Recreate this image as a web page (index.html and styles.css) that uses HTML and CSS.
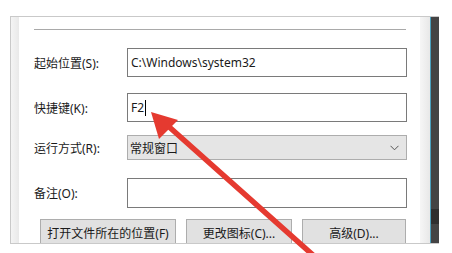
FILE: index.html
```html
<!DOCTYPE html>
<html lang="zh-CN">
<head>
    <meta charset="UTF-8">
    <title>快捷方式属性</title>
    <link rel="stylesheet" href="styles.css">
</head>
<body>

<div class="window">
    <div class="edge-left"></div>
    <div class="panel">
        <div class="separator"></div>

        <div class="row row-start">
            <label class="label">起始位置(S):</label>
            <div class="field">C:\Windows\system32</div>
        </div>

        <div class="row row-key">
            <label class="label">快捷键(K):</label>
            <div class="field">F2<span class="caret"></span></div>
        </div>

        <div class="row row-run">
            <label class="label">运行方式(R):</label>
            <div class="select">
                <span>常规窗口</span>
                <svg class="chevron" width="9" height="6" viewBox="0 0 9 6">
                    <path d="M0.5 0.8 L4.5 4.8 L8.5 0.8" fill="none" stroke="#555" stroke-width="1"/>
                </svg>
            </div>
        </div>

        <div class="row row-note">
            <label class="label">备注(O):</label>
            <div class="field"></div>
        </div>

        <div class="buttons">
            <button class="btn btn-open">打开文件所在的位置(F)</button>
            <button class="btn btn-icon">更改图标(C)...</button>
            <button class="btn btn-adv">高级(D)...</button>
        </div>
    </div>
    <div class="edge-right"></div>
    <div class="edge-blue"></div>
    <div class="edge-dark">
        <div class="dark-block"></div>
    </div>
</div>

<svg class="arrow" width="452" height="253" viewBox="0 0 452 253">
    <path d="M314 256 L167 125" stroke="#e53a30" stroke-width="5.5" stroke-linecap="round"/>
    <polygon points="151,112 178,120 159,139" fill="#e53a30"/>
</svg>

</body>
</html>
```

FILE: styles.css
```css
body {
    margin: 0;
    background-color: white;
    font-family: "Noto Sans", "Noto Sans CJK SC", sans-serif;
    font-size: 12px;
    color: #1a1a1a;
    position: relative;
    width: 452px;
    height: 253px;
    overflow: hidden;
}

.window {
    display: flex;
    box-sizing: border-box;
    margin: 16px 0 0 10px;
    width: 429px;
    height: 228px;
    border-top: 1px solid #c9c9c9;
    border-left: 1px solid #c9c9c9;
    border-bottom: 1px solid #c9c9c9;
    overflow: hidden;
}

.edge-left {
    width: 8px;
    background: linear-gradient(to right, #f4f4f4, #e9e9e9);
}

.panel {
    width: 401px;
    box-sizing: border-box;
    padding: 0 12px 0 15px;
    background-color: white;
}

.separator {
    margin-top: 12px;
    height: 1px;
    width: 372px;
    background-color: #a9a9a9;
}

.row {
    display: grid;
    grid-template-columns: 93px 280px;
    align-items: center;
}

.row-start { margin-top: 18px; }
.row-key { margin-top: 16px; }
.row-run { margin-top: 13px; }
.row-note { margin-top: 18px; }

.label {
    white-space: nowrap;
}

.field {
    box-sizing: border-box;
    height: 29px;
    border: 1px solid #7a7a7a;
    padding: 0 3px;
    display: flex;
    align-items: center;
    background-color: white;
}

.row-note .field {
    height: 30px;
}

.caret {
    display: inline-block;
    width: 1px;
    height: 16px;
    background-color: #000;
    margin-left: 1px;
}

.select {
    box-sizing: border-box;
    height: 25px;
    border: 1px solid #adadad;
    background-color: #e5e5e5;
    display: flex;
    align-items: center;
    justify-content: space-between;
    padding: 0 7px 0 2px;
}

.buttons {
    display: flex;
    gap: 10px;
    margin-top: 11px;
    padding-left: 6px;
}

.btn {
    box-sizing: border-box;
    height: 28px;
    border: 1px solid #adadad;
    background-color: #e1e1e1;
    font-family: "Noto Sans", "Noto Sans CJK SC", sans-serif;
    font-size: 12px;
    color: #1a1a1a;
    padding: 0;
}

.btn-open { width: 136px; }
.btn-icon { width: 106px; }
.btn-adv { width: 104px; }

.edge-right {
    width: 10px;
    background: linear-gradient(to right, #f6f6f6, #e8e8e8);
}

.edge-blue {
    width: 1px;
    background-color: #4aa0bd;
}

.edge-dark {
    width: 8px;
    background-color: #444;
    position: relative;
}

.dark-block {
    margin-top: 192px;
    height: 15px;
    background-color: #2f2f2f;
}

.arrow {
    position: absolute;
    left: 0;
    top: 0;
}
```
